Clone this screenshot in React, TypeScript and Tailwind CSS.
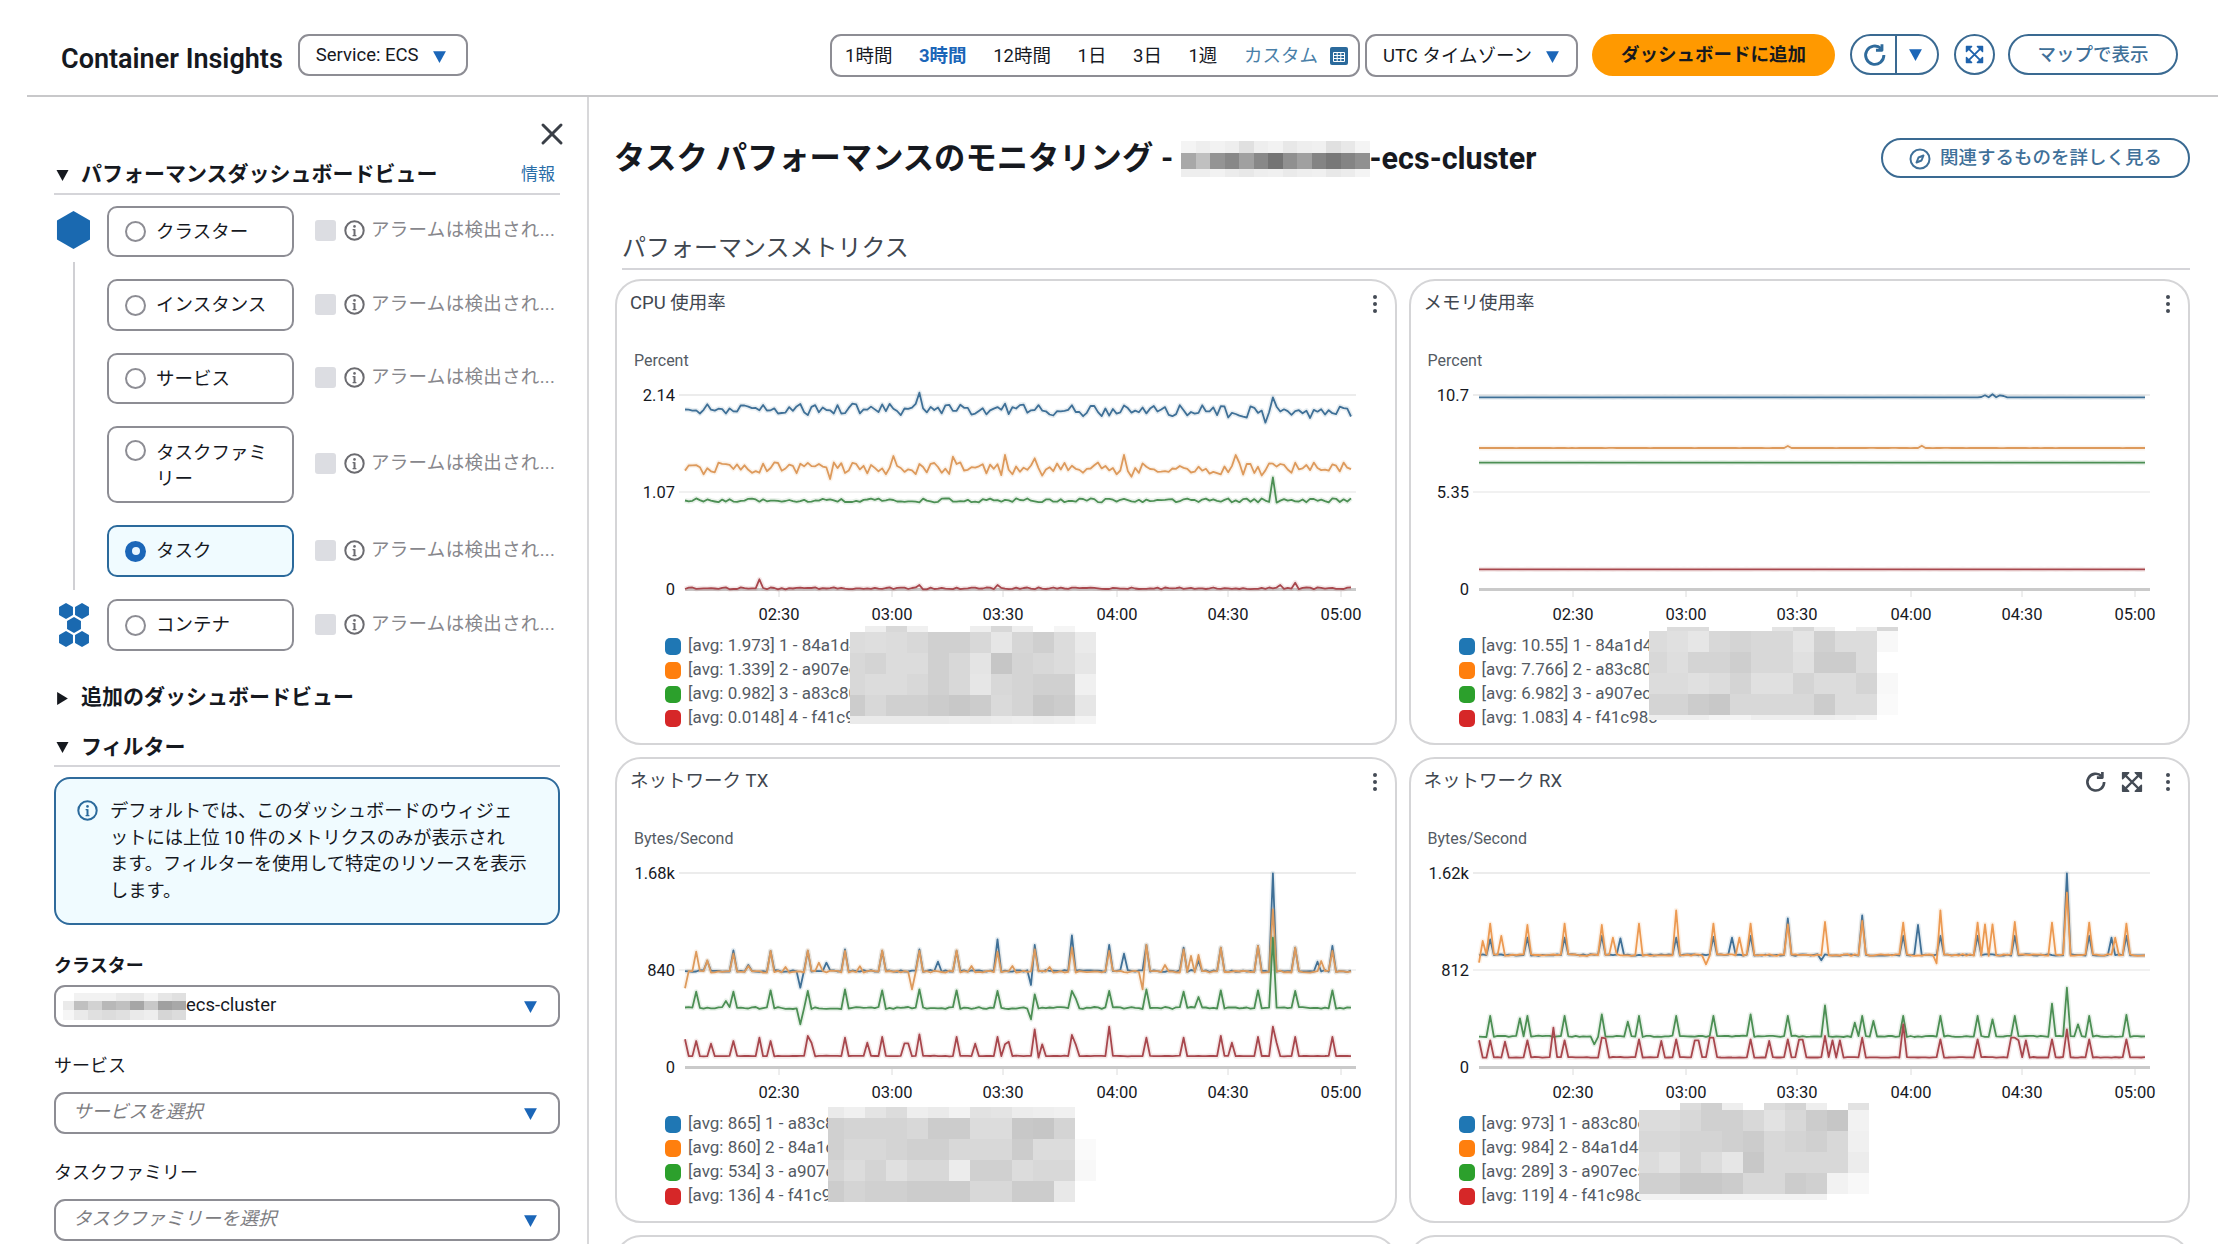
import { X } from "lucide-react";

const FONT = "font-['Roboto','Noto_Sans_CJK_JP',sans-serif]";

type Spike = [number, number];

type Line = {
  color: string;
  base: number | ((t: number) => number);
  amp: number;
  seed: number;
  spikes?: Spike[];
};

type ChartProps = {
  title: string;
  unit: string;
  yLabels: [string, string];
  range: [number, number];
  offset: number;
  lines: Line[];
  legend: string[];
  mosaic: { x: number; y: number; rows: string[]; top: number; bottom: number; first: number };
  hover?: boolean;
};

const SWATCHES = ["bg-[#1f77b4]", "bg-[#ff7f0e]", "bg-[#2ca02c]", "bg-[#d62728]"];

function rng(seed: number) {
  let a = seed;
  return () => {
    a = (a + 0x6d2b79f5) | 0;
    let t = Math.imul(a ^ (a >>> 15), 1 | a);
    t = (t + Math.imul(t ^ (t >>> 7), 61 | t)) ^ t;
    return ((t ^ (t >>> 14)) >>> 0) / 4294967296;
  };
}

function linePath(line: Line, range: [number, number], offset: number) {
  const n = 180;
  const [x0, x1] = range;
  const r = rng(line.seed);
  const ys: number[] = [];
  for (let k = 0; k < n; k++) {
    const t = k / (n - 1);
    const b = typeof line.base === "function" ? line.base(t) : line.base;
    ys.push(b + (r() - 0.5) * 2 * line.amp);
  }
  for (const [sx, sy] of line.spikes ?? []) {
    const k = Math.round(((sx - x0) / (x1 - x0)) * (n - 1));
    ys[Math.max(0, Math.min(n - 1, k))] = sy;
  }
  return ys
    .map((y, k) => {
      const px = 68 + (k / (n - 1)) * 666;
      return `${k === 0 ? "M" : "L"}${px.toFixed(1)} ${(y / 3 - offset).toFixed(1)}`;
    })
    .join(" ");
}

// pixelated patches that hide the resource names
function Mosaic({ rows, cell, top, bottom, first, mid }: { rows: string[]; cell: number; top: number; bottom: number; first: number; mid?: number }) {
  return (
    <div className="flex flex-col">
      {rows.map((row, i) => (
        <div key={i} className="flex" style={{ height: i === 0 ? top : i === rows.length - 1 ? bottom : (mid ?? cell) }}>
          {row.split(" ").map((c, j) => (
            <div key={j} style={{ width: j === 0 ? first : cell, backgroundColor: `#${c}${c}${c}` }} />
          ))}
        </div>
      ))}
    </div>
  );
}

function Tri({ className, dir = "down" }: { className: string; dir?: "down" | "right" }) {
  return (
    <svg viewBox="0 0 14 14" className={className}>
      {dir === "down" ? <path d="M1 2h12L7 13z" fill="currentColor" /> : <path d="M2 1l10 6-10 6z" fill="currentColor" />}
    </svg>
  );
}

function Caret() {
  return <Tri className="h-[15px] w-[15px] shrink-0 text-[#1b66b8]" />;
}

function InfoIcon({ className }: { className: string }) {
  return (
    <svg viewBox="0 0 21 21" className={className} fill="none">
      <circle cx="10.5" cy="10.5" r="9.2" stroke="currentColor" strokeWidth="2" />
      <circle cx="10.5" cy="6.4" r="1.3" fill="currentColor" />
      <path d="M10.5 9.2v6.2" stroke="currentColor" strokeWidth="2" />
      <path d="M8.6 9.6h2M8.6 15.6h3.8" stroke="currentColor" strokeWidth="1.4" />
    </svg>
  );
}

function RefreshIcon({ className }: { className: string }) {
  return (
    <svg viewBox="0 0 20 20" className={className} fill="none" stroke="currentColor" strokeWidth="2.4">
      <path d="M15 4.6A7.6 7.6 0 1 0 17.4 10" />
      <path d="M15.8 1v5h-5" strokeLinejoin="round" />
    </svg>
  );
}

function ExpandIcon({ className }: { className: string }) {
  return (
    <svg viewBox="0 0 20 20" className={className} fill="none" stroke="currentColor">
      <path d="M4 4l12 12M16 4L4 16" strokeWidth="2" />
      <path d="M1.5 7V1.5H7L1.5 7zM13 1.5h5.5V7L13 1.5zM1.5 13v5.5H7L1.5 13zM18.5 13v5.5H13l5.5-5.5z" fill="currentColor" strokeWidth="1.4" strokeLinejoin="round" />
    </svg>
  );
}

function Dots() {
  return (
    <svg viewBox="0 0 6 20" className="h-[20px] w-[6px] text-[#444b55]" fill="currentColor">
      <circle cx="3" cy="3" r="2" />
      <circle cx="3" cy="10" r="2" />
      <circle cx="3" cy="17" r="2" />
    </svg>
  );
}

function Hex({ cx, cy, r }: { cx: number; cy: number; r: number }) {
  const w = r * 0.87;
  return <path d={`M${cx} ${cy - r}L${cx + w} ${cy - r / 2}V${cy + r / 2}L${cx} ${cy + r}L${cx - w} ${cy + r / 2}V${cy - r / 2}z`} fill="#1a69b0" />;
}

const VIEWS = [
  { label: "クラスター", h: "h-[51px]" },
  { label: "インスタンス", h: "h-[52px]" },
  { label: "サービス", h: "h-[51px]" },
  { label: "タスクファミリー", h: "h-[77px]", tall: true },
  { label: "タスク", h: "h-[52px]", on: true },
  { label: "コンテナ", h: "h-[52px]" },
];

function ViewRow({ view, index }: { view: (typeof VIEWS)[number]; index: number }) {
  return (
    <div className="flex items-center">
      <div className="flex w-[53px] shrink-0 justify-start">
        {index === 0 && (
          <svg viewBox="0 0 36 38" className="mt-[-4px] h-[38px] w-[36px]">
            <Hex cx={19.5} cy={19} r={19} />
          </svg>
        )}
        {index === 5 && (
          <svg viewBox="0 0 36 44" className="h-[44px] w-[36px]">
            <Hex cx={12} cy={8} r={8} />
            <Hex cx={28} cy={8} r={8} />
            <Hex cx={20} cy={22} r={8} />
            <Hex cx={12} cy={36} r={8} />
            <Hex cx={28} cy={36} r={8} />
          </svg>
        )}
      </div>
      <div
        className={`flex w-[187px] shrink-0 gap-[10px] rounded-[10px] border-2 pl-[16px] pr-2 text-[18.5px] leading-[26px] text-[#16191f] ${view.h} ${
          view.tall ? "items-start pt-[12px]" : "items-center"
        } ${view.on ? "border-[#2b6a9c] bg-[#f0fbff]" : "border-[#8d8d94] bg-white"}`}
      >
        {view.on ? (
          <span className="flex h-[21px] w-[21px] shrink-0 items-center justify-center rounded-full bg-[#1b66b8]">
            <span className="h-[8px] w-[8px] rounded-full bg-[#e8f6ff]" />
          </span>
        ) : (
          <span className="h-[21px] w-[21px] shrink-0 rounded-full border-2 border-[#8d8d94] bg-white" />
        )}
        <span>{view.label}</span>
      </div>
      <span className="ml-[21px] mt-[-2px] h-[21px] w-[21px] shrink-0 rounded-[3px] bg-[#dcdde2]" />
      <InfoIcon className="ml-[8px] mt-[-2px] h-[21px] w-[21px] shrink-0 text-[#6b6b70]" />
      <span className="ml-[6px] mt-[-3px] whitespace-nowrap text-[18.5px] leading-[26px] tracking-[0.3px] text-[#87878c]">アラームは検出され...</span>
    </div>
  );
}

function Field({ label, value, bold, last }: { label: string; value?: string; bold?: boolean; last?: boolean }) {
  return (
    <div className={last ? "" : "mb-[26px]"}>
      <div className={`text-[18px] leading-[26px] text-[#16191f] ${bold ? "font-bold" : ""}`}>{label}</div>
      <div className={`flex h-[42px] items-center justify-between rounded-[11px] border-2 border-[#8d8d94] pr-[20px] ${bold ? "mt-[6px]" : "mt-[13px]"}`}>
        {value ? (
          <span className="flex items-center pl-[7px]">
            <Mosaic first={11} cell={14} top={8} mid={9} bottom={10} rows={["ff f2 f2 f2 ea e8 f4 e6 e0", "ea c0 d2 b8 c0 a6 c8 a0 a8", "f6 ea e0 dc e0 ea ee d6 dc"]} />
            <span className="text-[18.5px] text-[#16191f]">ecs-cluster</span>
          </span>
        ) : (
          <span className="pl-[17px] text-[18.5px] italic text-[#7d7d82]">{label}を選択</span>
        )}
        <Caret />
      </div>
    </div>
  );
}

function Chart({ title, unit, yLabels, range, offset, lines, legend, mosaic, hover }: ChartProps) {
  const ticks = [
    ["02:30", 162],
    ["03:00", 275],
    ["03:30", 386],
    ["04:00", 500],
    ["04:30", 611],
    ["05:00", 724],
  ] as const;
  return (
    <div className="relative h-[466px] rounded-[26px] border-2 border-[#d5d5d7] bg-white">
      <div className="flex h-[44px] items-center justify-between pl-[13px] pr-[17px] pt-[2px]">
        <span className="text-[18.5px] text-[#414750]">{title}</span>
        <div className="flex items-center">
          {hover && <RefreshIcon className="mr-[14px] h-[22px] w-[22px] text-[#444b55]" />}
          {hover && <ExpandIcon className="mr-[22px] h-[22px] w-[22px] text-[#444b55]" />}
          <Dots />
        </div>
      </div>
      <div className="mt-[24px] h-[24px] pl-[17px] text-[16px] leading-[24px] text-[#545b64]">{unit}</div>
      <svg width="778" height="250" viewBox="0 0 778 250" className="mt-[2px] block overflow-visible" fill="none">
        <path d="M62 20H739" stroke="#ececec" strokeWidth="2" />
        <path d="M62 117H739" stroke="#ececec" strokeWidth="1.5" />
        <path d="M68 214.5H739" stroke="#cacaca" strokeWidth="3" />
        {ticks.map(([t, x]) => (
          <g key={t}>
            <path d={`M${x} 216V222`} stroke="#dcdcdc" />
            <text x={x} y={245} textAnchor="middle" fontSize="16.5" fill="#16191f">
              {t}
            </text>
          </g>
        ))}
        <text x={58} y={26} textAnchor="end" fontSize="16.5" fill="#16191f">
          {yLabels[0]}
        </text>
        <text x={58} y={123} textAnchor="end" fontSize="16.5" fill="#16191f">
          {yLabels[1]}
        </text>
        <text x={58} y={220} textAnchor="end" fontSize="16.5" fill="#16191f">
          0
        </text>
        {lines.map((l) => {
          const d = linePath(l, range, offset);
          return (
            <g key={l.seed}>
              <path d={d} stroke={l.color} strokeWidth="5" strokeOpacity="0.12" strokeLinejoin="round" />
              <path d={d} stroke={l.color} strokeWidth="1.8" strokeLinejoin="round" />
            </g>
          );
        })}
      </svg>
      <div className="mt-[9px] pl-[48px]">
        {legend.map((t, i) => (
          <div key={t} className="flex h-[24px] items-center gap-[7px] text-[17px] text-[#545b64]">
            <span className={`h-[17px] w-[16px] rounded-[5px] ${SWATCHES[i]}`} />
            <span className="whitespace-nowrap">{t}</span>
          </div>
        ))}
      </div>
      <div className="absolute" style={{ left: mosaic.x, top: mosaic.y }}>
        <Mosaic rows={mosaic.rows} cell={21} first={mosaic.first} top={mosaic.top} bottom={mosaic.bottom} />
      </div>
    </div>
  );
}

const CPU: ChartProps = {
  title: "CPU 使用率",
  unit: "Percent",
  yLabels: ["2.14", "1.07"],
  range: [148, 1453],
  offset: 105,
  lines: [
    { color: "#3f7097", seed: 11, amp: 18, base: (t) => 418 + 18 * Math.max(0, t - 0.45), spikes: [[610, 368], [1300, 382], [1288, 458]] },
    { color: "#dd9a5c", seed: 22, amp: 20, base: 597, spikes: [[557, 558], [675, 560], [778, 555], [836, 565], [1005, 555], [1225, 555], [435, 627], [1020, 620]] },
    { color: "#4c8f54", seed: 33, amp: 6, base: 691, spikes: [[1300, 622], [1308, 698]] },
    { color: "#a8474d", seed: 44, amp: 3, base: 955, spikes: [[293, 928], [1343, 938], [1315, 945], [758, 945], [610, 945]] },
  ],
  legend: ["[avg: 1.973] 1 - 84a1d4e", "[avg: 1.339] 2 - a907ec5", "[avg: 0.982] 3 - a83c80e", "[avg: 0.0148] 4 - f41c98c"],
  mosaic: {
    x: 233,
    y: 345,
    first: 15,
    top: 6,
    bottom: 8,
    rows: [
      "ff ee d8 f0 ff ff ee d8 ee ff f5 ff",
      "dc de dc d8 d0 d0 d8 e6 d6 cf dc ea",
      "d8 d4 dc dc d0 d8 e4 c6 d4 d8 dc e6",
      "d8 dc dc d8 d0 d8 e6 d8 d4 d0 d0 f0",
      "cc d8 d0 d0 cc c8 cc da d4 c8 cc e6",
      "ea ea ea ea ea ec ea ec ee ec ee f4",
    ],
  },
};

const MEM: ChartProps = {
  title: "メモリ使用率",
  unit: "Percent",
  yLabels: ["10.7", "5.35"],
  range: [132, 1397],
  offset: 105,
  lines: [
    { color: "#3f7097", seed: 51, amp: 0.2, base: 382, spikes: [[1088, 381], [1095, 376], [1105, 373], [1118, 376], [1130, 378], [1145, 382]] },
    { color: "#dd9a5c", seed: 52, amp: 0.2, base: 534, spikes: [[722, 528], [970, 527]] },
    { color: "#4c8f54", seed: 53, amp: 0.2, base: 578 },
    { color: "#a8474d", seed: 54, amp: 0.2, base: 898 },
  ],
  legend: ["[avg: 10.55] 1 - 84a1d4e", "[avg: 7.766] 2 - a83c80e", "[avg: 6.982] 3 - a907ec5", "[avg: 1.083] 4 - f41c98c"],
  mosaic: {
    x: 238.5,
    y: 346,
    first: 18,
    top: 4,
    bottom: 5,
    rows: [
      "ff dc dc ff ff ff e4 d8 ee ff f0 d8",
      "dc e0 e6 d8 d4 d8 d8 e4 d0 dc dc f8",
      "d8 de d4 d4 ce d8 d8 e0 cc cc dc ff",
      "dc dc e0 dc d4 e0 e0 d4 dc dc d4 f8",
      "d4 d4 cc c8 d8 d8 d8 d8 cc dc dc fa",
      "ee ee ee f4 f4 ee ee ee ee f0 f4 ff",
    ],
  },
};

const TX: ChartProps = {
  title: "ネットワーク TX",
  unit: "Bytes/Second",
  yLabels: ["1.68k", "840"],
  range: [148, 1453],
  offset: 92,
  lines: [
    {
      color: "#3f7097",
      seed: 61,
      amp: 3,
      base: 630,
      spikes: [[192, 600], [243, 568], [272, 612], [316, 570], [375, 680], [391, 570], [427, 605], [463, 565], [537, 570], [610, 565], [645, 602], [683, 570], [757, 535], [824, 672], [830, 552], [903, 523], [978, 552], [1006, 578], [1051, 552], [1125, 560], [1155, 600], [1198, 560], [1271, 555], [1300, 337], [1345, 560], [1388, 602], [1417, 555]],
    },
    {
      color: "#dd9a5c",
      seed: 62,
      amp: 3,
      base: 632,
      spikes: [[148, 682], [168, 572], [192, 598], [243, 578], [272, 615], [316, 570], [347, 618], [391, 568], [412, 605], [463, 570], [490, 616], [537, 568], [595, 685], [610, 570], [683, 568], [712, 615], [757, 572], [790, 615], [830, 565], [860, 618], [903, 560], [978, 570], [1043, 685], [1051, 552], [1088, 612], [1125, 565], [1140, 585], [1155, 582], [1198, 560], [1271, 555], [1300, 445], [1345, 560], [1395, 600], [1417, 570]],
    },
    {
      color: "#4c8f54",
      seed: 63,
      amp: 3,
      base: 741,
      spikes: [[168, 692], [228, 720], [243, 692], [316, 688], [375, 790], [391, 690], [463, 685], [537, 688], [610, 685], [683, 688], [757, 690], [824, 775], [830, 700], [903, 690], [917, 712], [978, 690], [1051, 685], [1125, 692], [1155, 708], [1198, 688], [1271, 688], [1300, 530], [1345, 690], [1417, 688]],
    },
    {
      color: "#a8474d",
      seed: 64,
      amp: 0.8,
      base: 885,
      spikes: [[148, 835], [168, 840], [198, 848], [243, 840], [294, 830], [316, 840], [391, 825], [398, 845], [463, 830], [508, 845], [537, 828], [575, 847], [582, 847], [610, 820], [683, 828], [720, 848], [757, 828], [772, 850], [780, 842], [830, 805], [838, 890], [850, 850], [903, 822], [910, 850], [978, 797], [1051, 830], [1125, 830], [1195, 825], [1217, 845], [1271, 828], [1300, 797], [1308, 845], [1345, 828], [1417, 828]],
    },
  ],
  legend: ["[avg: 865] 1 - a83c80e", "[avg: 860] 2 - 84a1d4e", "[avg: 534] 3 - a907ec5", "[avg: 136] 4 - f41c98c"],
  mosaic: {
    x: 211,
    y: 348,
    first: 16,
    top: 11,
    bottom: 0,
    rows: [
      "ea f0 e4 dc ee ea f2 e2 e4 ec ee f0 ff",
      "d0 d4 d4 d4 d8 cc cc dc dc c8 c6 d4 ff",
      "d0 d8 d8 d4 d0 d0 d8 d8 d8 cc dc dc fa",
      "d4 dc d4 e0 d8 d8 ec d0 d0 dc d8 d8 f8",
      "cc d4 d0 d0 cc cc cc d8 d8 cc cc e8 ff",
      "ff ff ff ff ff ff ff ff ff ff ff ff ff",
    ],
  },
};

const RX: ChartProps = {
  title: "ネットワーク RX",
  unit: "Bytes/Second",
  yLabels: ["1.62k", "812"],
  range: [132, 1397],
  offset: 92,
  hover: true,
  lines: [
    {
      color: "#3f7097",
      seed: 71,
      amp: 2.5,
      base: 582,
      spikes: [[153, 535], [225, 530], [295, 530], [366, 525], [402, 532], [508, 530], [579, 528], [615, 530], [650, 525], [720, 472], [785, 598], [863, 463], [937, 525], [964, 492], [1007, 525], [1077, 525], [1149, 525], [1248, 337], [1290, 525], [1333, 530], [1361, 525]],
    },
    {
      color: "#ec9a52",
      seed: 72,
      amp: 2.5,
      base: 582,
      spikes: [[132, 605], [140, 540], [153, 488], [174, 525], [225, 492], [295, 488], [366, 492], [387, 530], [437, 488], [508, 448], [565, 610], [579, 488], [630, 530], [650, 488], [720, 490], [792, 483], [863, 480], [937, 485], [998, 607], [1007, 448], [1077, 485], [1092, 490], [1106, 490], [1149, 483], [1219, 485], [1248, 395], [1290, 485], [1340, 530], [1361, 488]],
    },
    {
      color: "#4c8f54",
      seed: 73,
      amp: 2,
      base: 826,
      spikes: [[153, 765], [210, 772], [225, 765], [295, 765], [350, 850], [366, 760], [416, 782], [437, 765], [508, 765], [579, 765], [650, 760], [720, 765], [792, 733], [843, 785], [863, 765], [878, 780], [937, 765], [1007, 765], [1077, 765], [1106, 775], [1149, 765], [1219, 728], [1248, 680], [1270, 790], [1290, 765], [1361, 762]],
    },
    {
      color: "#a8474d",
      seed: 74,
      amp: 1,
      base: 889,
      spikes: [[132, 838], [153, 838], [182, 842], [225, 838], [273, 800], [295, 838], [366, 830], [373, 832], [437, 835], [480, 840], [508, 835], [545, 838], [552, 838], [572, 830], [579, 830], [650, 835], [685, 840], [720, 835], [740, 836], [750, 836], [790, 825], [805, 838], [815, 838], [863, 830], [937, 790], [1007, 835], [1077, 835], [1140, 830], [1149, 830], [1160, 838], [1168, 838], [1219, 835], [1248, 805], [1290, 835], [1361, 835]],
    },
  ],
  legend: ["[avg: 973] 1 - a83c80e", "[avg: 984] 2 - 84a1d4e", "[avg: 289] 3 - a907ec5", "[avg: 119] 4 - f41c98c"],
  mosaic: {
    x: 228.5,
    y: 344,
    first: 20,
    top: 7,
    bottom: 6,
    rows: [
      "ff ff dc d0 ee ff dc d4 ee ff e2 ff",
      "dc dc d8 d0 d0 d8 e2 d8 cc c6 f2 ff",
      "d8 d8 d4 d4 d0 cc d8 d4 d0 d8 f0 ff",
      "dc e2 d4 dc e6 c8 d8 d8 d8 d8 ec ff",
      "d0 d0 c8 c8 cc d8 d8 cc d0 f2 f8 ff",
      "f2 f2 f2 f2 f2 f2 f2 f2 f2 ff ff ff",
    ],
  },
};

export default function App() {
  return (
    <div className={`h-[1244px] w-[2236px] overflow-hidden bg-white ${FONT}`}>
      <header className="ml-[27px] mr-[18px] flex h-[97px] items-start border-b-2 border-[#c8c8ca] pl-[34px] pr-[40px] pt-[34px]">
        <h2 className="mt-[7px] text-[27px] font-semibold leading-[36px] text-[#16191f]">Container Insights</h2>
        <div className="ml-[15px] flex h-[42px] w-[170px] items-center justify-between rounded-[11px] border-2 border-[#8d8d94] pl-[16px] pr-[19px] pt-[2px] text-[18.5px] text-[#16191f]">
          Service: ECS
          <Caret />
        </div>
        <div className="flex-1" />
        <div className="flex h-[43px] w-[530px] items-center justify-between rounded-[11px] border-2 border-[#8d8d94] pl-[13px] pr-[10px] pt-[2px] text-[18.5px] text-[#16191f]">
          <span>1時間</span>
          <span className="font-bold text-[#1b66b8]">3時間</span>
          <span>12時間</span>
          <span>1日</span>
          <span>3日</span>
          <span>1週</span>
          <span className="flex items-center gap-[12px] text-[#4a7fa8]">
            カスタム
            <svg viewBox="0 0 18 18" className="mt-[-2px] h-[18px] w-[18px]">
              <rect width="18" height="18" rx="2" fill="#2b6a9c" />
              <path d="M3.5 5.5h11v9h-11zM3.5 8.5h11M3.5 11.5h11M7.2 5.5v9M10.8 5.5v9" fill="none" stroke="#fff" strokeWidth="1" />
            </svg>
          </span>
        </div>
        <div className="ml-[5px] flex h-[43px] w-[213px] items-center justify-between rounded-[11px] border-2 border-[#8d8d94] pl-[16px] pr-[16px] pt-[2px] text-[18.5px] text-[#16191f]">
          UTC タイムゾーン
          <Caret />
        </div>
        <div className="ml-[14px] flex h-[42px] w-[243px] items-center justify-center rounded-full bg-[#ff9900] pt-[2px] text-[18.5px] font-bold text-[#16191f]">ダッシュボードに追加</div>
        <div className="ml-[15px] flex h-[41px] w-[89px] items-center rounded-full border-2 border-[#3a6a92] text-[#2f6b9c]">
          <div className="flex h-full w-[43px] items-center justify-center">
            <RefreshIcon className="ml-[3px] h-[24px] w-[24px]" />
          </div>
          <div className="flex h-full flex-1 items-center justify-center border-l-2 border-[#3a6a92] pr-[4px]">
            <Caret />
          </div>
        </div>
        <div className="ml-[15px] flex h-[41px] w-[41px] items-center justify-center rounded-full border-2 border-[#3a6a92] text-[#1f63ad]">
          <ExpandIcon className="h-[19px] w-[19px]" />
        </div>
        <div className="ml-[13px] flex h-[41px] w-[170px] items-center justify-center rounded-full border-2 border-[#3a6a92] pt-[2px] text-[18.5px] font-medium text-[#3f7099]">マップで表示</div>
      </header>
      <div className="flex h-[1147px]">
        <aside className="ml-[27px] w-[562px] shrink-0 border-r-2 border-[#d8d8da] pl-[27px] pr-[27px]">
          <div className="flex justify-end pt-[19px]">
            <X className="mr-[-10px] h-[36px] w-[36px] text-[#3a3f47]" strokeWidth={2} />
          </div>
          <div className="mt-[3px] flex h-[40px] items-center border-b-2 border-[#d5d5d9] pt-[2px]">
            <Tri className="ml-[1px] h-[14px] w-[15px] text-[#16191f]" />
            <span className="ml-[11px] text-[21px] font-bold text-[#16191f]">パフォーマンスダッシュボードビュー</span>
            <span className="ml-auto mr-[5px] text-[17px] text-[#2a6ea8]">情報</span>
          </div>
          <div className="relative mt-[11px] flex flex-col gap-[22px]">
            <div className="absolute bottom-[61px] left-[19px] top-[56px] w-[2px] bg-[#d0d0d4]" />
            {VIEWS.map((v, i) => (
              <ViewRow key={v.label} view={v} index={i} />
            ))}
          </div>
          <div className="mt-[33px] flex h-[28px] items-center">
            <Tri dir="right" className="ml-[1px] h-[15px] w-[15px] text-[#16191f]" />
            <span className="ml-[11px] text-[21px] font-bold text-[#16191f]">追加のダッシュボードビュー</span>
          </div>
          <div className="mt-[21px] flex h-[34px] items-start border-b-2 border-[#d5d5d9]">
            <Tri className="ml-[1px] mt-[7px] h-[14px] w-[15px] text-[#16191f]" />
            <span className="ml-[11px] text-[21px] font-bold leading-[28px] text-[#16191f]">フィルター</span>
          </div>
          <div className="mt-[10px] flex h-[148px] gap-[12px] rounded-[16px] border-2 border-[#2f6b9c] bg-[#f0fbff] pl-[21px] pr-[14px] pt-[19px]">
            <InfoIcon className="mt-[2px] h-[21px] w-[21px] shrink-0 text-[#2b6a9c]" />
            <p className="whitespace-nowrap text-[18.3px] leading-[26.5px] text-[#16191f]">
              デフォルトでは、このダッシュボードのウィジェ
              <br />
              ットには上位 10 件のメトリクスのみが表示され
              <br />
              ます。フィルターを使用して特定のリソースを表示
              <br />
              します。
            </p>
          </div>
          <div className="mt-[28px]">
            <Field label="クラスター" value="ecs-cluster" bold />
            <Field label="サービス" />
            <Field label="タスクファミリー" last />
          </div>
        </aside>
        <main className="min-w-0 flex-1 pl-[26px] pr-[46px]">
          <div className="mt-[41px] flex h-[40px] items-center justify-between">
            <h1 className="ml-[-1px] mt-[2px] flex items-center text-[31.3px] font-bold text-[#16191f]">
              タスク パフォーマンスのモニタリング -&nbsp;
              <Mosaic first={14.5} cell={14.5} top={12} mid={16} bottom={8} rows={["f4 ee f2 ee e0 ee f2 e8 ee f0 e0 e8 f4", "a8 c0 94 88 a0 88 74 90 a0 84 78 84 90", "ee ee f2 ec e8 ee f0 ea ee f0 e8 ec f4"]} />
              <span className="text-[30.5px]">-ecs-cluster</span>
            </h1>
            <div className="flex h-[40px] w-[309px] items-center justify-center gap-[9px] rounded-full border-2 border-[#3a6a92] pt-[1px] text-[18.5px] font-medium text-[#3f7099]">
              <svg viewBox="0 0 22 22" className="h-[22px] w-[22px]" fill="none" stroke="currentColor" strokeWidth="2">
                <circle cx="11" cy="11" r="9.5" />
                <path d="M14.5 7.5l-2 5-5 2 2-5z" strokeLinejoin="round" />
              </svg>
              関連するものを詳しく見る
            </div>
          </div>
          <div className="ml-[7px] mt-[53px] flex h-[39px] items-start border-b-2 border-[#d5d5d9] text-[24px] leading-[34px] text-[#414750]">パフォーマンスメトリクス</div>
          <div className="mt-[9px] grid grid-cols-2 gap-x-[12px] gap-y-[12px]">
            <Chart {...CPU} />
            <Chart {...MEM} />
            <Chart {...TX} />
            <Chart {...RX} />
            <div className="h-[466px] rounded-[26px] border-2 border-[#d5d5d7]" />
            <div className="h-[466px] rounded-[26px] border-2 border-[#d5d5d7]" />
          </div>
        </main>
      </div>
    </div>
  );
}
